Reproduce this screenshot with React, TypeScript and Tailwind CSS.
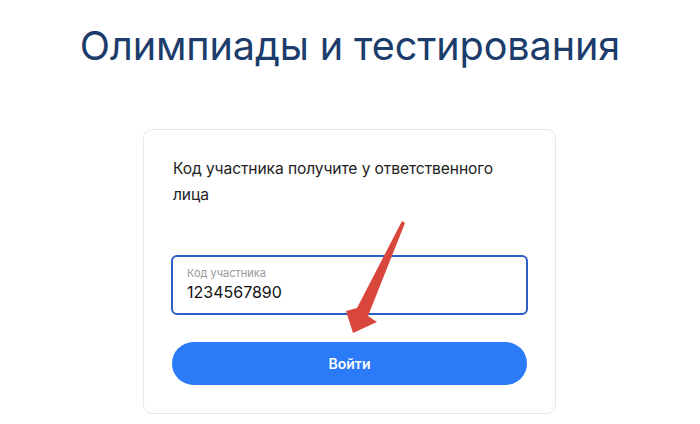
import React from "react";

export default function App() {
  return (
    <div className="relative w-[700px] h-[424px] bg-white overflow-hidden" style={{ fontFamily: "Inter, 'Noto Sans', sans-serif" }}>
      <div className="flex flex-col items-center">
        <h1 className="mt-[22px] text-[39.6px] leading-[48px] text-[#1c3c6c] font-normal tracking-[-0.1px]">
          Олимпиады и тестирования
        </h1>
        <div className="mt-[59px] mr-[1px] w-[413px] h-[285px] border border-[#e6e8ec] rounded-[9px] px-[27px] pt-[26px] flex flex-col">
          <p className="text-[15.6px] leading-[26px] text-[#222] pl-[2px] tracking-[-0.1px]">
            Код участника получите у ответственного лица
          </p>
          <div className="mt-[47px] h-[60px] border-2 border-[#2b5fc4] rounded-[6px] px-[14px] pt-[9px] flex flex-col">
            <span className="text-[11px] leading-[14px] text-[#9a9a9a]">Код участника</span>
            <span className="text-[16px] leading-[22px] text-[#111] mt-[1px]">1234567890</span>
          </div>
          <button className="mt-[27px] mx-[1px] h-[43px] rounded-full bg-[#2b7bf8] text-white text-[14px] font-semibold">
            Войти
          </button>
        </div>
      </div>
      <svg className="absolute left-0 top-0" width="700" height="424" viewBox="0 0 700 424">
        <polygon
          points="402,221 405,223 368,316 377,322 353,333 346,311 357,308"
          fill="#d9473c"
        />
      </svg>
    </div>
  );
}
